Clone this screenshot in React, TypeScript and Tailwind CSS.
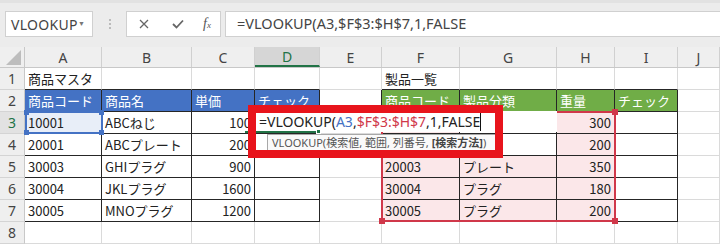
import React from 'react';

type Kind = 'blue' | 'green' | 'pink' | 'sel';
type Cell = { t?: string; r?: boolean; k?: Kind };

const COL_W = ['w-[77px]', 'w-[90px]', 'w-[63px]', 'w-[65px]', 'w-[62px]', 'w-[78px]', 'w-[97px]', 'w-[58px]', 'w-[63px]', 'w-[42px]'];
const LETTERS = ['A', 'B', 'C', 'D', 'E', 'F', 'G', 'H', 'I', 'J'];

const KIND_CLASS: Record<Kind, string> = {
  blue: 'bg-[#4472c4] text-white',
  green: 'bg-[#70ad47] text-white',
  pink: 'bg-[#fbe7e9] text-[#222]',
  sel: 'bg-[#e8eef8] text-[#222]',
};

const e: Cell = {};
// F3:G4 sit under the editor / tooltip, so they stay blank here
const ROWS: Cell[][] = [
  [{ t: '商品マスタ' }, e, e, e, e, { t: '製品一覧' }, e, e, e, e],
  [
    { t: '商品コード', k: 'blue' }, { t: '商品名', k: 'blue' }, { t: '単価', k: 'blue' }, { t: 'チェック', k: 'blue' }, e,
    { t: '商品コード', k: 'green' }, { t: '製品分類', k: 'green' }, { t: '重量', k: 'green' }, { t: 'チェック', k: 'green' }, e,
  ],
  [{ t: '10001', k: 'sel' }, { t: 'ABCねじ' }, { t: '100', r: true }, e, e, { k: 'pink' }, e, { t: '300', r: true, k: 'pink' }, e, e],
  [{ t: '20001' }, { t: 'ABCプレート' }, { t: '200', r: true }, e, e, { k: 'pink' }, e, { t: '200', r: true, k: 'pink' }, e, e],
  [{ t: '30003' }, { t: 'GHIプラグ' }, { t: '900', r: true }, e, e, { t: '20003', k: 'pink' }, { t: 'プレート', k: 'pink' }, { t: '350', r: true, k: 'pink' }, e, e],
  [{ t: '30004' }, { t: 'JKLプラグ' }, { t: '1600', r: true }, e, e, { t: '30004', k: 'pink' }, { t: 'プラグ', k: 'pink' }, { t: '180', r: true, k: 'pink' }, e, e],
  [{ t: '30005' }, { t: 'MNOプラグ' }, { t: '1200', r: true }, e, e, { t: '30005', k: 'pink' }, { t: 'プラグ', k: 'pink' }, { t: '200', r: true, k: 'pink' }, e, e],
  [e, e, e, e, e, e, e, e, e, e],
];

// tables: A2:D7 and F2:I7 (row 1-based, col 0-based)
const inTable = (r: number, c: number) =>
  r >= 2 && r <= 7 && ((c >= 0 && c <= 3) || (c >= 5 && c <= 8));

function Toolbar() {
  return (
    <div className="h-[47px] bg-[#ececec] border-t-[3px] border-t-[#e2e2e2] flex items-start pt-[8px] pl-[5px] font-['Noto_Sans',sans-serif]">
      <div className="w-[88px] h-[26px] bg-white border border-[#d0d0d0] flex items-center pl-[5px] pr-[7px] text-[14px] text-[#444]">
        <span className="flex-1 tracking-[0.3px]">VLOOKUP</span>
        <span className="text-[7px] text-[#777]">▼</span>
      </div>
      <div className="w-[33px] h-[26px] flex flex-col items-center justify-center gap-[2px]">
        <span className="w-[2px] h-[2px] bg-[#bbb]" />
        <span className="w-[2px] h-[2px] bg-[#bbb]" />
        <span className="w-[2px] h-[2px] bg-[#bbb]" />
      </div>
      <div className="w-[95px] h-[26px] bg-white border border-[#d0d0d0] flex items-center text-[#666]">
        <svg className="ml-[12px]" width="10" height="10" viewBox="0 0 10 10">
          <path d="M1 1L9 9M9 1L1 9" stroke="#666" strokeWidth="1.3" fill="none" />
        </svg>
        <svg className="ml-[23px]" width="12" height="10" viewBox="0 0 12 10">
          <path d="M1 5L4.5 8.5L11 1.5" stroke="#666" strokeWidth="1.8" fill="none" />
        </svg>
        <span className="ml-[19px] font-['Liberation_Serif',serif] italic text-[14px] text-[#555] leading-none">
          f<span className="text-[9px]">x</span>
        </span>
      </div>
      <div className="ml-[4px] flex-1 h-[26px] bg-white border border-[#d0d0d0] border-r-0 flex items-center pl-[11px] text-[14.5px] text-[#444] font-['Noto_Sans',sans-serif]">
        =VLOOKUP(A3,$F$3:$H$7,1,FALSE
      </div>
    </div>
  );
}

function ColumnHeader() {
  return (
    <div className="flex h-[21px] bg-[#efefef] border-b border-b-[#c8c8c8] text-[14px] text-[#444] font-['Noto_Sans',sans-serif]">
      <div className="w-[25px] h-full border-r border-r-[#c8c8c8] flex items-end justify-end pr-[3px] pb-[2px]">
        <svg width="15" height="15" viewBox="0 0 15 15">
          <path d="M15 0L15 15L0 15Z" fill="#bdbdbd" />
        </svg>
      </div>
      {LETTERS.map((l, i) => (
        <div
          key={l}
          className={`${COL_W[i]} h-full flex items-center justify-center border-r border-r-[#d0d0d0] ${
            i === 3 ? 'bg-[#d6d6d6] text-[#217346] border-b-2 border-b-[#217346]' : ''
          }`}
        >
          {l}
        </div>
      ))}
    </div>
  );
}

function Grid() {
  return (
    <div className="font-['Noto_Sans_CJK_JP',sans-serif] text-[13px] text-[#222]">
      {ROWS.map((row, ri) => {
        const r = ri + 1;
        return (
          <div key={r} className="flex h-[22px]">
            <div
              className={`w-[25px] h-full flex items-center justify-center border-r border-b border-r-[#c8c8c8] border-b-[#d4d4d4] font-['Noto_Sans',sans-serif] text-[14px] ${
                r === 3 ? 'bg-[#e2e2e2] text-[#217346]' : 'bg-[#efefef] text-[#444]'
              }`}
            >
              {r}
            </div>
            {row.map((cell, c) => {
              const rightDark = inTable(r, c) || inTable(r, c + 1);
              const bottomDark = inTable(r, c) || inTable(r + 1, c);
              return (
                <div
                  key={c}
                  className={`${COL_W[c]} h-full border-r border-b flex items-center px-[3px] overflow-hidden whitespace-nowrap ${
                    rightDark ? 'border-r-[#262626]' : 'border-r-[#dadada]'
                  } ${bottomDark ? 'border-b-[#262626]' : 'border-b-[#dadada]'} ${
                    cell.k ? KIND_CLASS[cell.k] : 'bg-white'
                  } ${cell.r ? 'justify-end' : 'justify-start'}`}
                >
                  {cell.t}
                </div>
              );
            })}
          </div>
        );
      })}
    </div>
  );
}

export default function App() {
  return (
    <div className="w-[720px] h-[244px] overflow-hidden bg-white">
      <Toolbar />
      <div className="relative">
        <ColumnHeader />
        <Grid />

        {/* A3 reference highlight (blue) */}
        <div className="absolute left-[25px] top-[64px] w-[78px] h-[23px] border-2 border-[#4472c4]">
          <span className="absolute -left-[3px] -top-[3px] w-[5px] h-[5px] bg-[#4472c4]" />
          <span className="absolute -right-[3px] -top-[3px] w-[5px] h-[5px] bg-[#4472c4]" />
          <span className="absolute -left-[3px] -bottom-[3px] w-[5px] h-[5px] bg-[#4472c4]" />
          <span className="absolute -right-[3px] -bottom-[3px] w-[5px] h-[5px] bg-[#4472c4]" />
        </div>

        {/* F3:H7 reference highlight (red) */}
        <div className="absolute left-[381px] top-[64px] w-[235px] h-[111px] border-2 border-[#d0384a]">
          <span className="absolute -left-[4px] -top-[4px] w-[6px] h-[6px] bg-[#d0384a]" />
          <span className="absolute -right-[4px] -top-[4px] w-[6px] h-[6px] bg-[#d0384a]" />
          <span className="absolute -left-[4px] -bottom-[4px] w-[6px] h-[6px] bg-[#d0384a]" />
          <span className="absolute -right-[4px] -bottom-[4px] w-[6px] h-[6px] bg-[#d0384a]" />
        </div>

        {/* in-cell editor for D3 */}
        <div className="absolute left-[255px] top-[64px] w-[302px] h-[21px] bg-white flex items-center pl-[4px] text-[14px] font-['Noto_Sans',sans-serif] text-[#222] whitespace-nowrap">
          <span>=VLOOKUP(</span>
          <span className="text-[#4472c4]">A3</span>
          <span>,</span>
          <span className="text-[#d0384a]">$F$3:$H$7</span>
          <span>,1,FALSE</span>
          <span className="w-[1px] h-[18px] bg-[#111]" />
        </div>
        <div className="absolute left-[245px] top-[84px] w-[75px] h-[2px] bg-[#217346]" />
        <div className="absolute left-[316px] top-[82px] w-[5px] h-[5px] bg-[#217346] border border-white" />

        {/* function tooltip */}
        <div className="absolute left-[267px] top-[87px] w-[229px] h-[18px] bg-[#fafafa] border border-[#a8a8a8] flex items-center pl-[4px] text-[11px] text-[#555] font-['Noto_Sans','Noto_Sans_CJK_JP',sans-serif] whitespace-nowrap overflow-hidden">
          VLOOKUP(検索値, 範囲, 列番号, <b className="ml-[3px] font-bold text-[#444]">[検索方法]</b>)
        </div>

        {/* callout frame */}
        <div className="absolute left-[248px] top-[58px] w-[255px] h-[53px] border-[8px] border-[#e8141c]" />
      </div>
    </div>
  );
}
